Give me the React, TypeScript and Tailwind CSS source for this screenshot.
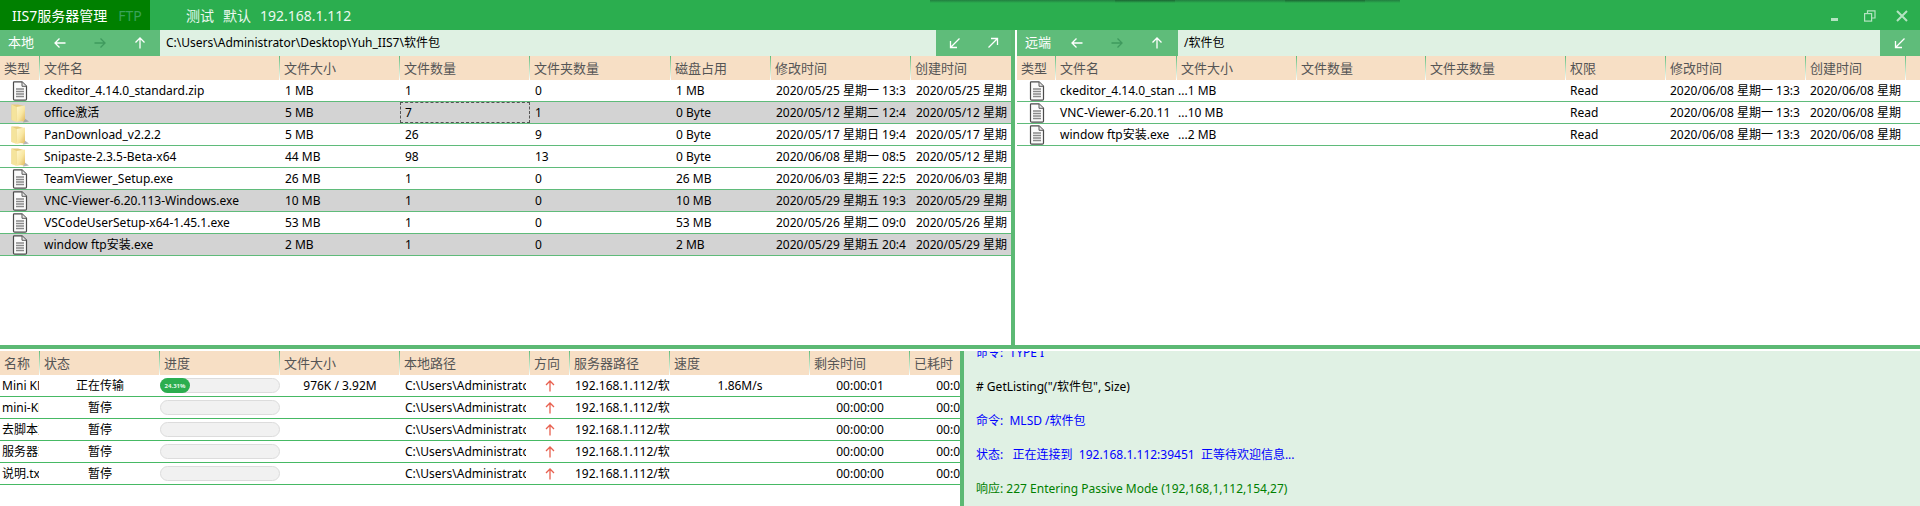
const font = "font-['Noto_Sans','Noto_Sans_CJK_SC',sans-serif]";

const leftCols = "grid-cols-[40px_240px_120px_130px_141px_100px_140px_100px]";
const rightCols = "grid-cols-[39px_121px_120px_129px_140px_100px_140px_100px_14px]";
const bottomCols = "grid-cols-[40px_120px_120px_120px_130px_40px_100px_140px_100px_100px]";

function FileIcon() {
  return (
    <svg width="16" height="20" viewBox="0 0 16 20" className="block">
      <path d="M1.5 1.5 Q1.5 0.8 2.2 0.8 H10 L14.5 5.3 V18 Q14.5 19.2 13.3 19.2 H2.7 Q1.5 19.2 1.5 18 Z" fill="#fbfbfb" stroke="#4a4a4a" strokeWidth="1.2" />
      <path d="M10 1 V5.3 H14.3" fill="#e8e8e8" stroke="#5a5a5a" strokeWidth="1" />
      <path d="M4 8 H12 M4 10.5 H12 M4 13 H12 M4 15.5 H12" stroke="#8a8a8a" strokeWidth="1.3" />
    </svg>
  );
}

function FolderIcon() {
  return (
    <svg width="20" height="20" viewBox="0 0 20 20" className="block">
      <defs>
        <linearGradient id="fold" x1="0" y1="0" x2="1" y2="1">
          <stop offset="0" stopColor="#fff8d2" />
          <stop offset="0.55" stopColor="#f8e6a0" />
          <stop offset="1" stopColor="#dfb65c" />
        </linearGradient>
      </defs>
      <path d="M14 15 L19 18.5 L13 19.5 Z" fill="#8f8f8f" opacity="0.65" />
      <path d="M1.5 1.5 H8 L14 3 V18.5 L1.5 17 Z" fill="#e6cb7c" />
      <path d="M6.5 4 L15 2.5 V17 L6.5 19 Z" fill="url(#fold)" />
      <path d="M1.5 1.5 V17 L6.5 19 V4 Z" fill="#f5e49c" />
    </svg>
  );
}

function Arrow({ d, dim }: { d: string; dim?: boolean }) {
  return (
    <svg width="14" height="14" viewBox="0 0 14 14" className="block">
      <path d={d} fill="none" stroke={dim ? "#3f9a5e" : "#ffffff"} strokeWidth="1.3" />
    </svg>
  );
}

const BACK = "M12.5 7 H2 M6.5 2.5 L2 7 L6.5 11.5";
const FWD = "M1.5 7 H12 M7.5 2.5 L12 7 L7.5 11.5";
const UP = "M7 12.5 V2 M2.5 6.5 L7 2 L11.5 6.5";
const DOWNLEFT = "M11.5 2.5 L2.5 11.5 M2.5 5 V11.5 H9";
const UPRIGHT = "M2.5 11.5 L11.5 2.5 M5 2.5 H11.5 V9";

function Header({ cols, labels }: { cols: string; labels: string[] }) {
  return (
    <div className={`grid ${cols} h-6 bg-[#f7dfc5] text-[13px] leading-6 text-[#555555] shrink-0`}>
      {labels.map((l, i) => (
        <div key={i} className="relative pl-1 whitespace-nowrap overflow-hidden">
          {l}
          {i < labels.length - 1 && (
            <span className="absolute right-0 top-0 bottom-0 w-px bg-gradient-to-b from-[#5fbb7a] to-[#ffffff]" />
          )}
        </div>
      ))}
    </div>
  );
}

function Toolbar({
  label,
  path,
  labelW,
  iconsR,
}: {
  label: string;
  path: string;
  labelW: string;
  iconsR: string[];
}) {
  return (
    <div className="flex h-[26px] shrink-0 bg-[#5fbc7a]">
      <div className={`flex items-center ${labelW}`}>
        <span className="pl-2 w-[53px] text-[13px] text-white">{label}</span>
        <span className="w-[40px]"><Arrow d={BACK} /></span>
        <span className="w-[40px]"><Arrow d={FWD} dim /></span>
        <span className="w-[27px]"><Arrow d={UP} /></span>
      </div>
      <div className="flex-1 flex items-center pl-[6px] bg-[#dff1e3] text-[12px] text-black">{path}</div>
      <div className={`flex items-center justify-center ${iconsR.length > 1 ? "w-[75px] gap-6" : "w-[40px]"}`}>
        {iconsR.map((d, i) => (
          <Arrow key={i} d={d} />
        ))}
      </div>
    </div>
  );
}

const L = (
  icon: string,
  name: string,
  size: string,
  a: string,
  b: string,
  disk: string,
  mod: string,
  cre: string,
  sel?: boolean,
) => ({ icon, name, size, a, b, disk, mod, cre, sel });

const leftRows = [
  L("f", "ckeditor_4.14.0_standard.zip", "1 MB", "1", "0", "1 MB", "2020/05/25 星期一 13:3", "2020/05/25 星期"),
  L("d", "office激活", "5 MB", "7", "1", "0 Byte", "2020/05/12 星期二 12:4", "2020/05/12 星期", true),
  L("d", "PanDownload_v2.2.2", "5 MB", "26", "9", "0 Byte", "2020/05/17 星期日 19:4", "2020/05/17 星期"),
  L("d", "Snipaste-2.3.5-Beta-x64", "44 MB", "98", "13", "0 Byte", "2020/06/08 星期一 08:5", "2020/05/12 星期"),
  L("f", "TeamViewer_Setup.exe", "26 MB", "1", "0", "26 MB", "2020/06/03 星期三 22:5", "2020/06/03 星期"),
  L("f", "VNC-Viewer-6.20.113-Windows.exe", "10 MB", "1", "0", "10 MB", "2020/05/29 星期五 19:3", "2020/05/29 星期", true),
  L("f", "VSCodeUserSetup-x64-1.45.1.exe", "53 MB", "1", "0", "53 MB", "2020/05/26 星期二 09:0", "2020/05/26 星期"),
  L("f", "window ftp安装.exe", "2 MB", "1", "0", "2 MB", "2020/05/29 星期五 20:4", "2020/05/29 星期", true),
];

const rightRows = [
  { name: "ckeditor_4.14.0_stan", size: "...1 MB" },
  { name: "VNC-Viewer-6.20.11", size: "...10 MB" },
  { name: "window ftp安装.exe", size: "...2 MB" },
];

const transfers = [
  { name: "Mini KMS", status: "正在传输", pct: true, size: "976K / 3.92M", speed: "1.86M/s", left: "00:00:01" },
  { name: "mini-KMS", status: "暂停", left: "00:00:00" },
  { name: "去脚本对", status: "暂停", left: "00:00:00" },
  { name: "服务器端", status: "暂停", left: "00:00:00" },
  { name: "说明.txt", status: "暂停", left: "00:00:00" },
];

const Cell = ({ children, className = "" }: { children?: React.ReactNode; className?: string }) => (
  <div className={`overflow-hidden whitespace-nowrap ${className}`}>{children}</div>
);

export default function App() {
  return (
    <div className={`${font} flex flex-col w-[1920px] h-[506px] overflow-hidden bg-white text-[12px] text-black`}>
      {/* title bar */}
      <div className="relative flex h-[30px] shrink-0 items-center bg-[#2bae4f] text-[14px] text-[#ecf8ef]">
        <div className="flex h-full w-[150px] items-center bg-[#008000] pl-3">
          <span className="text-white">IIS7服务器管理</span>
          <span className="ml-[11px] text-[#3aa25a]">FTP</span>
        </div>
        <div className="ml-[36px] flex gap-[9px] whitespace-nowrap">
          <span>测试</span>
          <span>默认</span>
          <span>192.168.1.112</span>
        </div>
        <div className="ml-auto flex items-center pr-3 pt-0.5">
          <svg width="10" height="10" viewBox="0 0 10 10" className="mr-6"><rect x="1" y="7" width="7" height="3" fill="#b5e3c2" /></svg>
          <svg width="12" height="12" viewBox="0 0 12 12" fill="none" stroke="#b5e3c2" strokeWidth="1.2" className="mr-5"><rect x="0.6" y="3.6" width="7" height="7.5" /><path d="M3.5 3.5 V0.8 H11 V8 H8" /></svg>
          <svg width="12" height="12" viewBox="0 0 12 12" fill="none" stroke="#b5e3c2" strokeWidth="2"><path d="M1 1 L11 11 M11 1 L1 11" /></svg>
        </div>
        <div className="absolute left-[930px] top-0 h-[3px] w-[470px] bg-gradient-to-b from-[#227f40] to-[#2bae4f]" />
        <div className="absolute left-[1115px] top-0 h-[3px] w-[60px] bg-gradient-to-b from-[#1b6633] to-[#2bae4f]" />
        <div className="absolute left-[1285px] top-0 h-[3px] w-[80px] bg-gradient-to-b from-[#1b6633] to-[#2bae4f]" />
      </div>

      {/* top panes */}
      <div className="flex h-[315px] shrink-0">
        <div className="flex w-[1011px] flex-col shrink-0 overflow-hidden">
          <Toolbar label="本地" path="C:\Users\Administrator\Desktop\Yuh_IIS7\软件包" labelW="w-[160px]" iconsR={[DOWNLEFT, UPRIGHT]} />
          <Header cols={leftCols} labels={["类型", "文件名", "文件大小", "文件数量", "文件夹数量", "磁盘占用", "修改时间", "创建时间"]} />
          {leftRows.map((r, i) => (
            <div key={i} className={`grid ${leftCols} h-[22px] border-b border-[#5fbb7a] leading-[21px] ${r.sel ? "bg-[#d3d3d3]" : "bg-white"}`}>
              <Cell className="flex items-center justify-center pt-px">{r.icon === "f" ? <FileIcon /> : <FolderIcon />}</Cell>
              <Cell className="pl-1">{r.name}</Cell>
              <Cell className="pl-[5px]">{r.size}</Cell>
              <Cell className={i === 1 ? "pl-1 border border-dashed border-[#555555] leading-[19px]" : "pl-[5px]"}>{r.a}</Cell>
              <Cell className="pl-[5px]">{r.b}</Cell>
              <Cell className="pl-[5px]">{r.disk}</Cell>
              <Cell className="pl-[5px]">{r.mod}</Cell>
              <Cell className="pl-[5px]">{r.cre}</Cell>
            </div>
          ))}
        </div>
        <div className="w-1 shrink-0 bg-[#5cb974]" />
        <div className="w-0.5 shrink-0 bg-white" />
        <div className="flex flex-1 flex-col min-w-0 overflow-hidden">
          <Toolbar label="远端" path="/软件包" labelW="w-[161px]" iconsR={[DOWNLEFT]} />
          <Header cols={rightCols} labels={["类型", "文件名", "文件大小", "文件数量", "文件夹数量", "权限", "修改时间", "创建时间", ""]} />
          {rightRows.map((r, i) => (
            <div key={i} className={`grid ${rightCols} h-[22px] border-b border-[#5fbb7a] leading-[21px]`}>
              <Cell className="flex items-center justify-center pt-px"><FileIcon /></Cell>
              <Cell className="pl-1">{r.name}</Cell>
              <Cell className="pl-px">{r.size}</Cell>
              <Cell />
              <Cell />
              <Cell className="pl-1">Read</Cell>
              <Cell className="pl-1">2020/06/08 星期一 13:3</Cell>
              <Cell className="pl-1">2020/06/08 星期</Cell>
              <Cell />
            </div>
          ))}
        </div>
      </div>

      <div className="h-1 shrink-0 bg-[#5cb974]" />
      <div className="h-0.5 shrink-0 bg-white" />

      {/* bottom panes */}
      <div className="flex min-h-0 flex-1">
        <div className="w-[960px] shrink-0 overflow-hidden">
          <div className="w-[1010px]">
            <Header cols={bottomCols} labels={["名称", "状态", "进度", "文件大小", "本地路径", "方向", "服务器路径", "速度", "剩余时间", "已耗时"]} />
            {transfers.map((t, i) => (
              <div key={i} className={`grid ${bottomCols} h-[22px] border-b border-[#46b964] leading-[21px]`}>
                <Cell className="pl-0.5 mr-px">{t.name}</Cell>
                <Cell className="text-center">{t.status}</Cell>
                <div className="flex items-center">
                  <div className="h-[15px] w-full rounded-full border border-[#dcdcdc] bg-[#f1f1f1]">
                    {t.pct && (
                      <div className="-ml-px -mt-px flex h-[15px] w-[30px] items-center justify-center rounded-full bg-[#2bae4f] text-[6px] font-bold leading-none text-[#e5f6e9]">
                        24.31%
                      </div>
                    )}
                  </div>
                </div>
                <Cell className="text-center">{t.size}</Cell>
                <Cell className="pl-[5px] mr-1">C:\Users\Administrator</Cell>
                <div className="flex items-center justify-center">
                  <svg width="10" height="12" viewBox="0 0 10 12" fill="none" stroke="#e8604f" strokeWidth="1.3"><path d="M5 11.5 V1 M1 5 L5 1 L9 5" /></svg>
                </div>
                <Cell className="pl-[5px]">192.168.1.112/软件包</Cell>
                <Cell className="text-center">{t.speed}</Cell>
                <Cell className="text-center">{t.left}</Cell>
                <Cell className="text-center">00:00:00</Cell>
              </div>
            ))}
          </div>
        </div>
        <div className="w-1 shrink-0 bg-[#5cb974]" />
        <div className="flex-1 overflow-hidden bg-[#e0f1e4] pl-3 text-[12px] leading-[34px]">
          <div className="-mt-[15px]">
            <div className="text-[#0000ff]">命令:&nbsp; TYPE I</div>
            <div className="text-black"># GetListing("/软件包", Size)</div>
            <div className="text-[#0000ff]">命令:&nbsp; MLSD /软件包</div>
            <div className="text-[#0000ff]">状态:&nbsp;&nbsp; 正在连接到&nbsp; 192.168.1.112:39451&nbsp; 正等待欢迎信息...</div>
            <div className="text-[#008000]">响应: 227 Entering Passive Mode (192,168,1,112,154,27)</div>
          </div>
        </div>
      </div>
    </div>
  );
}
